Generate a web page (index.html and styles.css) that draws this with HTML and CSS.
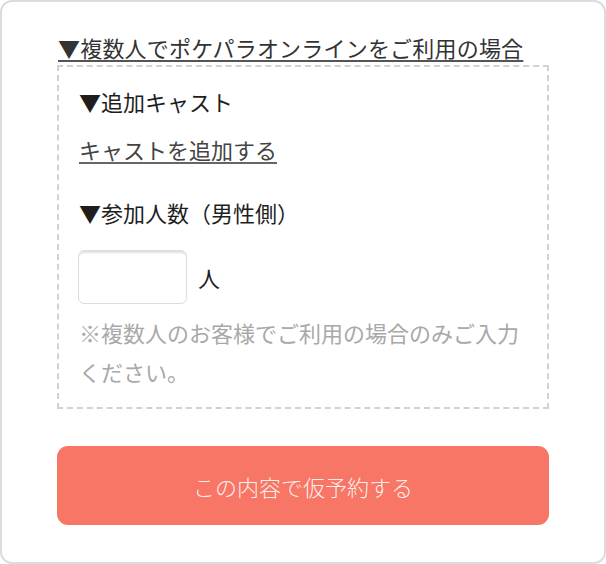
FILE: index.html
```html
<!DOCTYPE html>
<html lang="ja">
<head>
  <meta charset="UTF-8" />
  <title>仮予約</title>
  <link rel="stylesheet" href="styles.css">
</head>
<body>
  <div class="card">
    <a class="group-title" href="#">▼複数人でポケパラオンラインをご利用の場合</a>
    <div class="group-box">
      <p class="label">▼追加キャスト</p>
      <a class="add-link" href="#">キャストを追加する</a>
      <p class="label label-count">▼参加人数（男性側）</p>
      <div class="count-row">
        <input class="count-input" type="text">
        <span class="unit">人</span>
      </div>
      <p class="note">※複数人のお客様でご利用の場合のみご入力ください。</p>
    </div>
    <button class="submit">この内容で仮予約する</button>
  </div>
</body>
</html>
```

FILE: styles.css
```css
html, body {
  margin: 0;
  padding: 0;
  background: #fff;
}
body {
  font-family: "Noto Sans CJK JP", "Noto Sans", sans-serif;
  font-size: 22px;
  color: #1e1e1e;
}
.card {
  box-sizing: border-box;
  width: 606px;
  height: 564px;
  border: 2px solid #dcdcdc;
  border-radius: 12px;
  padding: 29px 55px 0 55px;
}
.group-title {
  display: inline-block;
  color: #333;
  line-height: 33px;
  letter-spacing: 0.2px;
  text-decoration: underline;
  text-decoration-color: #555;
  text-underline-offset: 3px;
  text-decoration-thickness: 2px;
  margin-left: 1px;
}
.group-box {
  margin-top: 1px;
  border: 2px dashed #d2d2d2;
  padding: 18px 20px 16px 20px;
}
.label {
  margin: 0;
  line-height: 33px;
}
.label-count {
  margin-top: 30px;
}
.add-link {
  display: inline-block;
  margin-top: 15px;
  color: #444;
  line-height: 33px;
  text-decoration: underline;
  text-decoration-color: #666;
  text-underline-offset: 3px;
  text-decoration-thickness: 2px;
}
.count-row {
  display: flex;
  align-items: center;
  gap: 11px;
  margin-top: 21px;
}
.count-input {
  box-sizing: border-box;
  width: 109px;
  height: 54px;
  border: 1px solid #ddd;
  border-radius: 6px;
  box-shadow: inset 0 3px 2px -1px rgba(0, 0, 0, 0.12);
  font-size: 22px;
  margin: 0 0 0 -1px;
}
.unit {
  line-height: 33px;
}
.note {
  margin: 9px 0 0 0;
  color: #a8a8a8;
  line-height: 39px;
}
.submit {
  display: block;
  width: 492px;
  height: 79px;
  margin-top: 37px;
  border: none;
  border-radius: 11px;
  background: #f87665;
  color: rgba(255, 255, 255, 0.9);
  font-family: inherit;
  font-size: 22px;
  font-weight: 300;
}
```
